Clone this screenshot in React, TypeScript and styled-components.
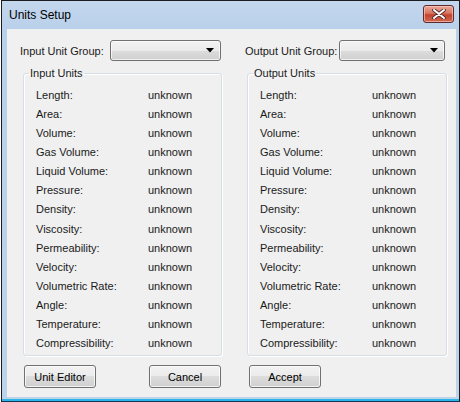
import React from 'react';
import styled, { createGlobalStyle } from 'styled-components';

const GlobalStyle = createGlobalStyle`
  html, body {
    margin: 0;
    padding: 0;
    background: #ffffff;
  }
  body {
    font-family: "Liberation Sans", Arial, sans-serif;
    font-size: 11px;
    color: #1a1a1a;
  }
`;

const quantities = [
  'Length:',
  'Area:',
  'Volume:',
  'Gas Volume:',
  'Liquid Volume:',
  'Pressure:',
  'Density:',
  'Viscosity:',
  'Permeability:',
  'Velocity:',
  'Volumetric Rate:',
  'Angle:',
  'Temperature:',
  'Compressibility:',
];

const CloseGlyph = () => (
  <svg width="14" height="10" viewBox="0 0 14 10">
    <path
      d="M2 1 L12 9 M12 1 L2 9"
      stroke="#4a2626"
      strokeWidth="3.6"
      strokeLinecap="round"
      fill="none"
    />
    <path
      d="M2 1 L12 9 M12 1 L2 9"
      stroke="#ffffff"
      strokeWidth="2"
      strokeLinecap="round"
      fill="none"
    />
  </svg>
);

const ComboArrow = () => (
  <svg width="8" height="5" viewBox="0 0 8 5">
    <path d="M0 0 H8 L4 4.5 Z" fill="#000" />
  </svg>
);

type UnitsPanelProps = { title: string };

const UnitsPanel = ({ title }: UnitsPanelProps) => (
  <GroupBox>
    <Legend>{title}</Legend>
    <UnitGrid>
      {quantities.map((q) => (
        <React.Fragment key={q}>
          <UnitLabel>{q}</UnitLabel>
          <UnitValue>unknown</UnitValue>
        </React.Fragment>
      ))}
    </UnitGrid>
  </GroupBox>
);

const App = () => {
  return (
    <>
      <GlobalStyle />
      <Window>
        <TitleBar>
          <Title>Units Setup</Title>
          <CloseButton aria-label="Close">
            <CloseGlyph />
          </CloseButton>
        </TitleBar>
        <Client>
          <Columns>
            <Column>
              <ComboRow>
                <FieldLabel>Input Unit Group:</FieldLabel>
                <Combo $width={111} $trim={1}>
                  <ComboArrow />
                </Combo>
              </ComboRow>
              <PanelSlot $offset={3}>
                <UnitsPanel title="Input Units" />
              </PanelSlot>
            </Column>
            <Column>
              <ComboRow>
                <FieldLabel>Output Unit Group:</FieldLabel>
                <Combo $width={106} $trim={2}>
                  <ComboArrow />
                </Combo>
              </ComboRow>
              <PanelSlot $offset={2}>
                <UnitsPanel title="Output Units" />
              </PanelSlot>
            </Column>
          </Columns>
          <ButtonRow>
            <ButtonGroup $spread>
              <PushButton>Unit Editor</PushButton>
              <PushButton>Cancel</PushButton>
            </ButtonGroup>
            <ButtonGroup>
              <PushButton>Accept</PushButton>
            </ButtonGroup>
          </ButtonRow>
        </Client>
      </Window>
    </>
  );
};

const Window = styled.div`
  box-sizing: border-box;
  width: 459px;
  height: 402px;
  margin-left: 1px;
  border: 1px solid #1c1c1c;
  border-bottom-color: #10345a;
  background: linear-gradient(#c3d7ee, #b9d0ea 30px, #bdd3ea);
  display: flex;
  flex-direction: column;
  box-shadow: inset 0 -2px 0 #2bb5e6;
`;

const TitleBar = styled.div`
  height: 28px;
  display: flex;
  align-items: center;
  justify-content: space-between;
  padding: 0 5px 0 7px;
  flex-shrink: 0;
`;

const Title = styled.span`
  font-size: 12px;
  color: #000;
  margin-top: -1px;
`;

const CloseButton = styled.div`
  box-sizing: border-box;
  width: 31px;
  height: 18px;
  margin-top: -3px;
  border: 1px solid #5e2a2a;
  border-radius: 3px;
  background: linear-gradient(#e9a99c, #d7755f 45%, #c4422e 55%, #cf6a52);
  box-shadow: inset 0 0 0 1px rgba(255, 210, 200, 0.6);
  display: flex;
  align-items: center;
  justify-content: center;
`;

const Client = styled.div`
  flex: 1;
  margin: 0 3px 4px 5px;
  background: #f0f0f0;
  padding: 11px 0 0 13px;
  display: flex;
  flex-direction: column;
`;

const Columns = styled.div`
  display: flex;
  gap: 23px;
`;

const Column = styled.div`
  width: 202px;
  display: flex;
  flex-direction: column;
`;

const ComboRow = styled.div`
  display: flex;
  align-items: center;
  height: 21px;
`;

const FieldLabel = styled.span`
  white-space: nowrap;
`;

const Combo = styled.div<{ $width: number; $trim: number }>`
  box-sizing: border-box;
  width: ${(p) => p.$width}px;
  height: 21px;
  margin-left: auto;
  margin-right: ${(p) => p.$trim}px;
  border: 1px solid #707070;
  border-radius: 3px;
  background: linear-gradient(#f2f2f2, #ebebeb 50%, #dddddd 50%, #cfcfcf);
  box-shadow: inset 0 0 0 1px rgba(255, 255, 255, 0.7);
  display: flex;
  align-items: center;
  justify-content: flex-end;
  padding-right: 6px;
`;

const PanelSlot = styled.div<{ $offset: number }>`
  margin-top: 6px;
  margin-left: ${(p) => p.$offset}px;
`;

const GroupBox = styled.fieldset`
  box-sizing: border-box;
  margin: 0;
  height: 289px;
  border: 1px solid #d5dfe5;
  border-radius: 3px;
  box-shadow: inset 1px 1px 0 #ffffff, 1px 1px 0 #ffffff;
  padding: 6px 0 0 12px;
`;

const Legend = styled.legend`
  padding: 0 1px;
  margin-left: -7px;
  color: #1a1a1a;
`;

const UnitGrid = styled.div`
  display: grid;
  grid-template-columns: 112px auto;
  grid-auto-rows: 19.15px;
  align-items: center;
`;

const UnitLabel = styled.span`
  white-space: nowrap;
`;

const UnitValue = styled.span`
  white-space: nowrap;
`;

const ButtonRow = styled.div`
  display: flex;
  gap: 23px;
  margin-top: 9px;
`;

const ButtonGroup = styled.div<{ $spread?: boolean }>`
  width: 202px;
  display: flex;
  justify-content: ${(p) => (p.$spread ? 'space-between' : 'flex-start')};
  padding: ${(p) => (p.$spread ? '0 1px 0 4px' : '0 0 0 4px')};
  box-sizing: border-box;
`;

const PushButton = styled.div`
  box-sizing: border-box;
  width: 72px;
  height: 23px;
  border: 1px solid #707070;
  border-radius: 3px;
  background: linear-gradient(#f2f2f2, #ebebeb 50%, #dddddd 50%, #cfcfcf);
  box-shadow: inset 0 0 0 1px rgba(255, 255, 255, 0.75);
  display: flex;
  align-items: center;
  justify-content: center;
  color: #000;
`;

export default App;
